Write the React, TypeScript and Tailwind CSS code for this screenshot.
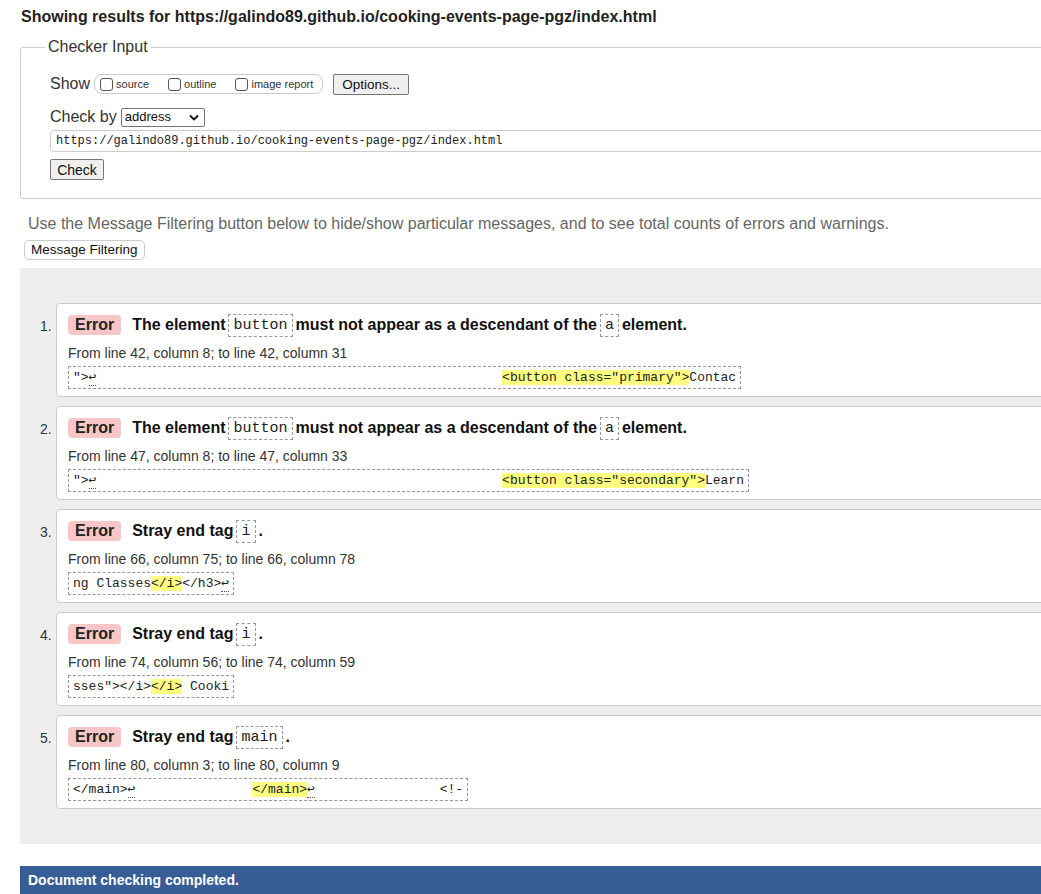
import React from "react";

const mono = { fontFamily: '"Liberation Mono", "DejaVu Sans Mono", monospace' };

function Code({ children }: { children: React.ReactNode }) {
  return (
    <code
      className="inline-block border border-dashed border-[#999] px-[4px] leading-[21px] text-[15px] font-normal text-[#222] align-middle mx-[3px]"
      style={mono}
    >
      {children}
    </code>
  );
}

function Ret() {
  return <span className="border-b border-dotted border-[#555]">↩</span>;
}

function Hl({ children }: { children: React.ReactNode }) {
  return <span className="bg-[#ffff80]">{children}</span>;
}

type Item = {
  msg: React.ReactNode;
  loc: string;
  extract: React.ReactNode;
};

const sp = (n: number) => " ".repeat(n);

const items: Item[] = [
  {
    msg: (
      <>
        The element<Code>button</Code>must not appear as a descendant of the<Code>a</Code>element.
      </>
    ),
    loc: "From line 42, column 8; to line 42, column 31",
    extract: (
      <>
        {'">'}
        <Ret />
        {sp(52)}
        <Hl>{'<button class="primary">'}</Hl>Contac
      </>
    ),
  },
  {
    msg: (
      <>
        The element<Code>button</Code>must not appear as a descendant of the<Code>a</Code>element.
      </>
    ),
    loc: "From line 47, column 8; to line 47, column 33",
    extract: (
      <>
        {'">'}
        <Ret />
        {sp(52)}
        <Hl>{'<button class="secondary">'}</Hl>Learn
      </>
    ),
  },
  {
    msg: (
      <>
        Stray end tag<Code>i</Code>.
      </>
    ),
    loc: "From line 66, column 75; to line 66, column 78",
    extract: (
      <>
        ng Classes<Hl>{"</i>"}</Hl>
        {"</h3>"}
        <Ret />
      </>
    ),
  },
  {
    msg: (
      <>
        Stray end tag<Code>i</Code>.
      </>
    ),
    loc: "From line 74, column 56; to line 74, column 59",
    extract: (
      <>
        {'sses"></i>'}
        <Hl>{"</i>"}</Hl> Cooki
      </>
    ),
  },
  {
    msg: (
      <>
        Stray end tag<Code>main</Code>.
      </>
    ),
    loc: "From line 80, column 3; to line 80, column 9",
    extract: (
      <>
        {"</main>"}
        <Ret />
        {sp(15)}
        <Hl>{"</main>"}</Hl>
        <Ret />
        {sp(16)}
        {"<!-"}
      </>
    ),
  },
];

function Checkbox() {
  return (
    <span className="inline-block w-[13px] h-[13px] border border-[#555] rounded-[3px] bg-white mr-[3px] align-[-2px]" />
  );
}

export default function App() {
  return (
    <div
      className="w-[1041px] h-[894px] overflow-hidden bg-white text-[#222]"
      style={{ fontFamily: '"Liberation Sans", Arial, sans-serif' }}
    >
      <div className="w-[1120px] pl-[20px]">
        <h2 className="pt-[8px] pl-[1px] text-[16px] leading-[18px] font-bold text-[#222]">
          Showing results for https://galindo89.github.io/cooking-events-page-pgz/index.html
        </h2>

        <fieldset className="mt-[11px] border border-[#ccc] rounded-[3px] pb-[16px]">
          <legend className="ml-[24px] px-[3px] text-[16px] leading-[20px] text-[#333]">Checker Input</legend>
          <div className="pl-[29px]">
            <div className="mt-[16px] flex items-center h-[22px]">
              <span className="text-[16px] text-[#333] mr-[4px]">Show</span>
              <span className="flex items-center h-[20px] border border-[#ccc] rounded-[8px] px-[5px] text-[11px] text-[#333]">
                <Checkbox />
                <span className="mr-[19px]">source</span>
                <Checkbox />
                <span className="mr-[19px]">outline</span>
                <Checkbox />
                <span className="mr-[4px]">image report</span>
              </span>
              <button className="ml-[10px] h-[21px] px-[8px] bg-[#efefef] border border-[#767676] rounded-[2px] text-[13.5px] text-[#111]">
                Options...
              </button>
            </div>
            <div className="mt-[12px] flex items-center h-[20px]">
              <span className="text-[16px] text-[#333] mr-[4px]">Check by</span>
              <span className="flex items-center justify-between w-[84px] h-[19px] border border-[#767676] rounded-[2px] bg-white pl-[3px] pr-[5px] text-[13px] text-[#111]">
                address
                <svg width="10" height="7" viewBox="0 0 10 7">
                  <path d="M1 1.5 L5 5.5 L9 1.5" fill="none" stroke="#111" strokeWidth="1.8" />
                </svg>
              </span>
            </div>
            <div
              className="mt-[3px] h-[22px] border border-[#ccc] rounded-l-[4px] pl-[5px] text-[12px] leading-[20px] text-[#222]"
              style={mono}
            >
              https://galindo89.github.io/cooking-events-page-pgz/index.html
            </div>
            <button className="mt-[7px] h-[21px] w-[54px] bg-[#efefef] border border-[#767676] rounded-[2px] text-[14px] text-[#111]">
              Check
            </button>
          </div>
        </fieldset>

        <p className="mt-[15px] pl-[8px] text-[16px] leading-[20px] text-[#666]">
          Use the Message Filtering button below to hide/show particular messages, and to see total counts of errors and warnings.
        </p>
        <button className="mt-[6px] ml-[4px] h-[20px] px-[6px] border border-[#ccc] rounded-[5px] bg-white text-[13.5px] text-[#111] leading-[18px]">
          Message Filtering
        </button>

        <div className="mt-[7px] bg-[#eeeeee] pl-[36px] pt-[35px] pb-[35px] flex flex-col gap-[9px]">
          {items.map((it, i) => (
            <div key={i} className="relative h-[94px] bg-white border border-[#ccc] rounded-[4px] pl-[11px] pt-[10px]">
              <span className="absolute left-[-17px] top-[12px] text-[14px] leading-[20px] text-[#333]">{i + 1}.</span>
              <div className="flex items-center h-[22px] text-[16px] font-bold text-[#111]">
                <span className="h-[20px] leading-[20px] px-[7px] bg-[#f7c7c7] rounded-[4px] text-[#222] mr-[11px]">Error</span>
                <span className="whitespace-pre-wrap">{it.msg}</span>
              </div>
              <div className="mt-[8px] text-[14px] leading-[18px] text-[#333]">{it.loc}</div>
              <div className="mt-[2px]">
                <span
                  className="inline-block h-[23px] border border-dashed border-[#999] px-[4px] text-[13px] leading-[21px] whitespace-pre text-[#222]"
                  style={mono}
                >
                  {it.extract}
                </span>
              </div>
            </div>
          ))}
        </div>

        <div className="mt-[22px] h-[28px] bg-[#365d95] pl-[8px] text-[14px] leading-[28px] font-bold text-white">
          Document checking completed.
        </div>
      </div>
    </div>
  );
}
